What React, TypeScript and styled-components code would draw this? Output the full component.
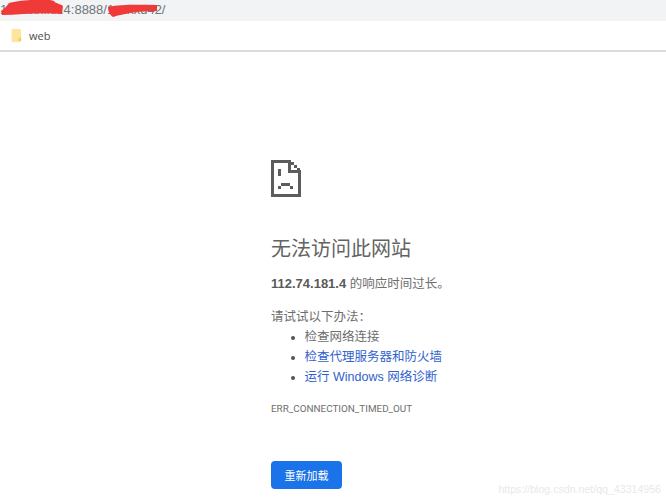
import React from "react";
import styled, { createGlobalStyle } from "styled-components";

const Global = createGlobalStyle`
  html, body { margin: 0; padding: 0; background: #fff; }
  body { font-family: "Liberation Sans", "Noto Sans CJK SC", sans-serif; }
`;
const Page = styled.div`
  width: 666px; height: 500px; position: relative; overflow: hidden; background: #fff;
`;
const AddressBar = styled.div`
  height: 21px; background: #f1f3f4; position: relative;
  font-size: 13px; line-height: 19px; color: #70757a; white-space: pre;
`;
const Scribble = styled.svg`
  position: absolute; left: 0; top: 0;
`;
const Bookmarks = styled.div`
  height: 29px; display: flex; align-items: center; gap: 7px; padding-left: 11px;
  border-bottom: 2px solid #dcdcdc; font-size: 11px; color: #4a4d50;
  font-family: "Open Sans", sans-serif;
`;
const Content = styled.main`
  padding: 108px 0 0 271px;
  color: #6e6e6e;
`;
const Title = styled.h1`
  margin: 37px 0 0; font-size: 20px; line-height: 30px; font-weight: 400; color: #636363;
`;
const Summary = styled.p`
  margin: 10px 0 0; font-size: 12.5px; line-height: 20px; color: #6e6e6e;
  b { color: #5a5a5a; font-size: 13px; }
`;
const Hint = styled.p`
  margin: 13px 0 0; font-size: 12.5px; line-height: 20px;
`;
const List = styled.ul`
  margin: 0; padding: 0 0 0 33.5px; font-size: 12.5px; line-height: 20px;
  li::marker { color: #555; }
`;
const Link = styled.span`
  color: #2f62cc;
`;
const Code = styled.div`
  margin-top: 15px; font-size: 9.9px; line-height: 14px; color: #6e6e6e;
  font-family: Roboto, sans-serif;
`;
const Reload = styled.button`
  display: block; margin-top: 45px; width: 71px; height: 28px; border: 0; border-radius: 4px;
  background: #1a73e8; color: #fff; font-size: 11px; padding: 0;
  font-family: "Liberation Sans", "Noto Sans CJK SC", sans-serif;
`;
const Watermark = styled.div`
  position: absolute; right: 5px; bottom: 5px; font-size: 10.6px; color: #e9e9e9;
  font-family: "Liberation Sans", sans-serif;
`;

const SadPage = () => (
  <svg width="30" height="37" viewBox="0 0 30 37" style={{ display: "block" }} shapeRendering="crispEdges" fill="#5c5c5c">
    <path d="M0 0h20v3H3v31h24V13h3v24H0z" />
    <path d="M20 2h3v3h-3zM23 5h3v3h-3zM26 8h3v3h-3z" />
    <path d="M17 3h3v7h10v3H17z" />
    <path d="M7 9h3v7H7zM7 29v-3h3v3zM10 26v-3h9v3zM19 26h3v3h-3z" />
  </svg>
);

const Folder = () => (
  <svg width="11" height="13" viewBox="0 0 11 13" style={{ display: "block" }}>
    <rect x="0.5" y="0" width="9.5" height="13" rx="1" fill="#fde59f" />
    <rect x="7.5" y="8.5" width="2.8" height="3.5" rx="1" fill="#f9cf50" />
  </svg>
);

export default function App() {
  return (
    <Page>
      <Global />
      <AddressBar>
        1xx.xxx.xx.4:8888/1xxxxd42/
        <Scribble width="180" height="21" viewBox="0 0 180 21">
          <path d="M1 11 C5 8 7 6 9 3 C18 1 24 0 34 0 C40 -1 48 -1 54 1 C56 4 59 3 63 6 L62 14 C40 12 20 15 2 15 Z" fill="#f03a3a" />
          <path d="M108 7 C122 4 140 5 157 5 L157 11 C140 11 126 13 113 17 C110 15 108 12 108 7 Z" fill="#f03a3a" />
        </Scribble>
      </AddressBar>
      <Bookmarks>
        <Folder />
        web
      </Bookmarks>
      <Content>
        <SadPage />
        <Title>无法访问此网站</Title>
        <Summary><b>112.74.181.4</b> 的响应时间过长。</Summary>
        <Hint>请试试以下办法：</Hint>
        <List>
          <li>检查网络连接</li>
          <li><Link>检查代理服务器和防火墙</Link></li>
          <li><Link>运行 Windows 网络诊断</Link></li>
        </List>
        <Code>ERR_CONNECTION_TIMED_OUT</Code>
        <Reload>重新加载</Reload>
      </Content>
      <Watermark>https://blog.csdn.net/qq_43314956</Watermark>
    </Page>
  );
}
